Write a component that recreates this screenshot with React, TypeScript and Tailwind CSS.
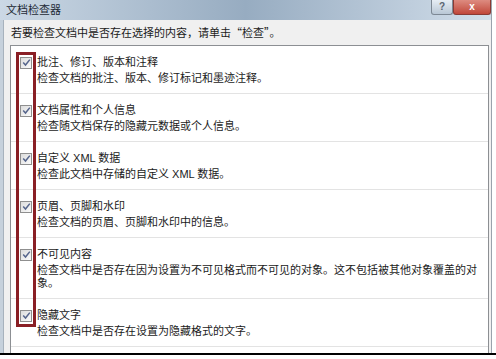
const items = [
  { title: '批注、修订、版本和注释', desc: '检查文档的批注、版本、修订标记和墨迹注释。' },
  { title: '文档属性和个人信息', desc: '检查随文档保存的隐藏元数据或个人信息。' },
  { title: '自定义 XML 数据', desc: '检查此文档中存储的自定义 XML 数据。' },
  { title: '页眉、页脚和水印', desc: '检查文档的页眉、页脚和水印中的信息。' },
  {
    title: '不可见内容',
    desc: '检查文档中是否存在因为设置为不可见格式而不可见的对象。这不包括被其他对象覆盖的对象。',
  },
  { title: '隐藏文字', desc: '检查文档中是否存在设置为隐藏格式的文字。' },
];

function CheckBox() {
  return (
    <div className="w-[12px] h-[12px] shrink-0 border border-[#8f8f8f] bg-gradient-to-br from-[#dcdcdc] to-[#fbfbfb] flex items-center justify-center">
      <svg width="9" height="9" viewBox="0 0 9 9">
        <path d="M1.2 4.6 L3.5 7 L7.8 1.6" fill="none" stroke="#56658c" strokeWidth="1.5" />
      </svg>
    </div>
  );
}

export default function App() {
  return (
    <div
      className="relative w-[496px] h-[359px] bg-white overflow-hidden text-[#1b1b1b]"
      style={{ fontFamily: '"Liberation Sans", "Noto Sans CJK SC", sans-serif' }}
    >
      <div className="flex flex-col h-[353px] w-[492px] border-r border-[#9aa3ad]">
        {/* title bar */}
        <div className="h-[20px] shrink-0 flex items-start bg-gradient-to-r from-[#cbd8e5] via-[#97acc1] to-[#d2deea]">
          <div className="pl-[6px] pt-[3px] text-[11px] leading-[15px] text-[#1e2a36]">文档检查器</div>
          <div className="ml-auto flex">
            <div className="w-[22px] h-[15px] border border-t-0 border-[#7d8894] rounded-b-[3px] bg-gradient-to-b from-[#e6edf4] to-[#b9c7d5] flex items-center justify-center text-[10px] leading-none text-[#5a6470] font-bold">
              ?
            </div>
            <div className="w-[38px] h-[15px] border border-t-0 border-[#8a3a34] rounded-b-[3px] bg-gradient-to-b from-[#dd8b80] to-[#c0463a] flex items-center justify-center text-[10px] leading-none text-white font-bold">
              x
            </div>
          </div>
        </div>

        {/* body */}
        <div className="flex flex-1 min-h-0">
          <div className="w-[4px] bg-[#c6d1dc] border-r border-[#a7b2bd]" />
          <div className="flex-1 flex flex-col bg-[#f0f0f0] pl-[6px] pr-[2px] pt-[4px]">
            <div
              className="pl-[1px] text-[11px] leading-[16px] [font-feature-settings:'fwid']"
              style={{ fontFamily: '"Noto Sans CJK SC", sans-serif' }}
            >
              若要检查文档中是否存在选择的内容，请单击“检查”。
            </div>
            <div className="mt-[5px] flex-1 bg-white border border-[#8c8f93] border-b-0">
              {items.map((it) => (
                <div key={it.title} className="border-b border-[#e3e3e3] pt-[9px] pb-[8px] pl-[9px] flex items-start gap-[5px]">
                  <div className="h-[15px] flex items-center">
                    <CheckBox />
                  </div>
                  <div className="text-[11px]">
                    <div className="leading-[15px]">{it.title}</div>
                    <div className="mt-[2px] leading-[13px] w-[444px]">{it.desc}</div>
                  </div>
                </div>
              ))}
            </div>
          </div>
        </div>
      </div>
      <div className="h-[2px] bg-black" />

      {/* red annotation frame */}
      <div className="absolute left-[16px] top-[52px] w-[20px] h-[275px] border-[3px] border-[#8a1f25]" />
    </div>
  );
}
